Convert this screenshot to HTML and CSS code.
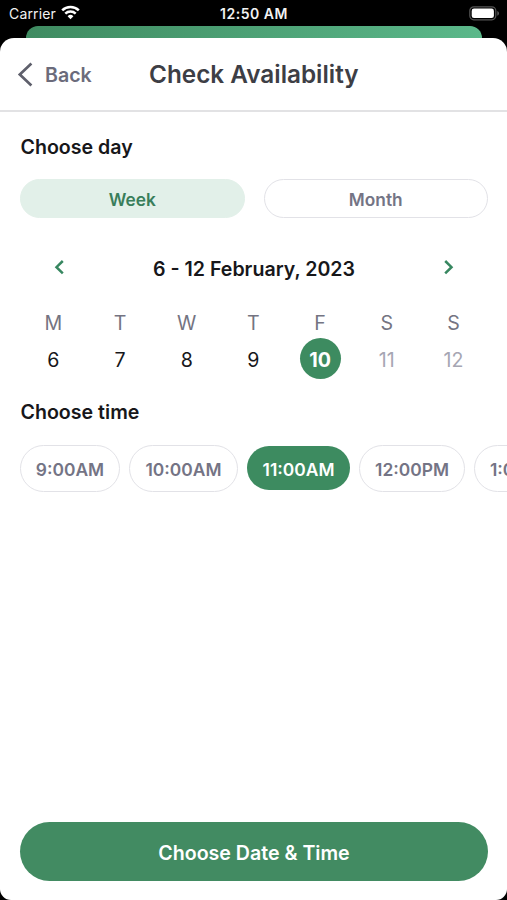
FILE: index.html
```html
<!DOCTYPE html>
<html lang="en">
<head>
<meta charset="utf-8">
<title>Check Availability</title>
<link rel="stylesheet" href="styles.css">
</head>
<body>
<div class="phone">
  <div class="status">
    <div class="carrier"><span>Carrier</span>
      <svg width="19" height="15" viewBox="0 0 19 15" fill="none" stroke="#fff" stroke-width="2.5"><path d="M1.2 5.4a11.8 11.8 0 0 1 16.6 0M4.3 8.7a7.4 7.4 0 0 1 10.4 0"/><path d="M6.6 11.2a4.2 4.2 0 0 1 5.8 0L9.5 14.3z" fill="#fff" stroke="none"/></svg>
    </div>
    <div class="clock">12:50 AM</div>
    <svg class="battery" width="31" height="15" viewBox="0 0 31 15"><rect x=".8" y=".8" width="26" height="13" rx="4" fill="none" stroke="#555" stroke-width="1.2"/><rect x="2.7" y="2.6" width="22.2" height="9.4" rx="2.3" fill="#fff"/><path d="M28.4 5v4.7c2-.8 2-3.9 0-4.7z" fill="#666"/></svg>
  </div>
  <div class="behind"></div>
  <main class="sheet">
    <header class="header">
      <a class="back"><svg width="16" height="26" viewBox="0 0 16 26" fill="none" stroke="#5f606c" stroke-width="2.7"><path d="M14.4 1.4 2.8 12.4l11.6 11"/></svg><span>Back</span></a>
      <h1>Check Availability</h1>
    </header>
    <section class="body">
      <h2 class="day-title">Choose day</h2>
      <div class="tabs"><button class="tab active">Week</button><button class="tab">Month</button></div>
      <div class="range">
        <svg width="10" height="16" viewBox="0 0 10 16" fill="none" stroke="#378760" stroke-width="2.5"><path d="M8.8 2 2.5 8.2l6.3 6.2"/></svg>
        <strong>6 - 12 February, 2023</strong>
        <svg width="10" height="16" viewBox="0 0 10 16" fill="none" stroke="#378760" stroke-width="2.5"><path d="M1.2 2 7.5 8.2l-6.3 6.2"/></svg>
      </div>
      <div class="week names"><span>M</span><span>T</span><span>W</span><span>T</span><span>F</span><span>S</span><span>S</span></div>
      <div class="week dates"><span>6</span><span>7</span><span>8</span><span>9</span><span class="selected"><b>10</b></span><span class="muted">11</span><span class="muted">12</span></div>
      <h2 class="time-title">Choose time</h2>
      <div class="times">
        <button class="time t9">9:00AM</button><button class="time t10">10:00AM</button><button class="time t11 chosen">11:00AM</button><button class="time t12">12:00PM</button><button class="time t1">1:00PM</button>
      </div>
    </section>
    <button class="submit">Choose Date &amp; Time</button>
  </main>
</div>
</body>
</html>
```
FILE: styles.css
```css
* { box-sizing: border-box; }
body { margin: 0; background: #000; font-family: Inter, "Liberation Sans", sans-serif; color: #17171a; }
button { font: inherit; padding: 0; margin: 0; border: 0; background: none; white-space: nowrap; }
h1, h2 { margin: 0; font-weight: 600; }
svg { display: block; flex: none; }
.phone { width: 507px; height: 900px; overflow: hidden; display: flex; flex-direction: column; background: #000; }
.status { height: 26px; flex: none; display: grid; grid-template-columns: 1fr auto 1fr; align-items: center; padding: 1px 7px 0 8px; color: #f2f2f2; font-size: 14px; }
.carrier { display: flex; align-items: center; gap: 5px; padding-left: 1px; letter-spacing: 0.15px; }
.carrier svg { margin-top: -2px; }
.clock { font-weight: 600; letter-spacing: 0.5px; }
.battery { justify-self: end; margin-top: -1px; }
.behind { flex: none; height: 24px; margin: 0 25px 0 26px; border-radius: 12px 12px 0 0; background: linear-gradient(90deg, #3f8b61, #5bb88a); }
.sheet { flex: none; height: 862px; margin-top: -12px; background: #fff; border-radius: 14px 14px 11px 11px; display: flex; flex-direction: column; overflow: hidden; }
.header { flex: none; height: 74px; border-bottom: 2px solid #e2e2e4; display: grid; grid-template-columns: 131px 1fr; align-items: center; padding: 1px 0 0 17px; }
.back { display: flex; align-items: center; gap: 12px; color: #6b6b7b; font-size: 19.6px; font-weight: 600; line-height: 24px; }
.back span { padding-top: 1px; }
h1 { padding: 0 0 1px 1px; font-size: 24.3px; line-height: 30px; color: #3d3e45; }
.body { padding: 0 0 0 20px; }
h2 { padding-left: 0.5px; font-size: 19.6px; line-height: 24px; }
.day-title { margin-top: 23px; }
.tabs { display: grid; grid-template-columns: 1fr 1fr; gap: 19px; height: 39px; margin: 20px 19px 0 0; }
.tab { border: 1.5px solid #e2e2e7; border-radius: 20px; font-size: 17.3px; font-weight: 600; color: #747485; padding-top: 1px; }
.tab.active { background: #e2f0e9; border-color: #e2f0e9; color: #397e5b; }
.range { display: flex; justify-content: space-between; align-items: center; height: 24px; margin: 38px 53px 0 34px; }
.range strong { font-size: 19.6px; font-weight: 600; line-height: 24px; padding-top: 2px; }
.range svg { margin-top: -2px; }
.week { display: grid; grid-template-columns: repeat(7, 66.7px); text-align: center; font-size: 19.6px; }
.names { margin-top: 31px; line-height: 24px; color: #747482; }
.dates { margin-top: 3px; height: 41px; line-height: 45px; }
.selected { display: flex; justify-content: center; }
.selected b { width: 41px; height: 41px; border-radius: 50%; background: #3d8b60; color: #fff; line-height: 44px; font-weight: 700; }
.muted { color: #a6a6b3; }
.time-title { margin-top: 21px; }
.times { display: flex; align-items: center; gap: 9px; margin-top: 20px; height: 48px; overflow: hidden; }
.time { flex: none; height: 47px; border: 1.5px solid #e2e2e7; border-radius: 24px; color: #747485; font-size: 17.4px; font-weight: 600; padding-top: 3px; }
.t9 { width: 100px; }
.t10 { width: 109px; }
.t11 { width: 103px; }
.t12 { width: 106px; }
.t1 { width: 95px; }
.time.chosen { height: 44px; border: 0; background: #3d8b60; color: #fff; }
.submit { flex: none; height: 59px; margin: auto 19px 19px 20px; border-radius: 30px; background: #428b62; color: #fff; font-size: 19.6px; font-weight: 600; padding-top: 3px; }
```
